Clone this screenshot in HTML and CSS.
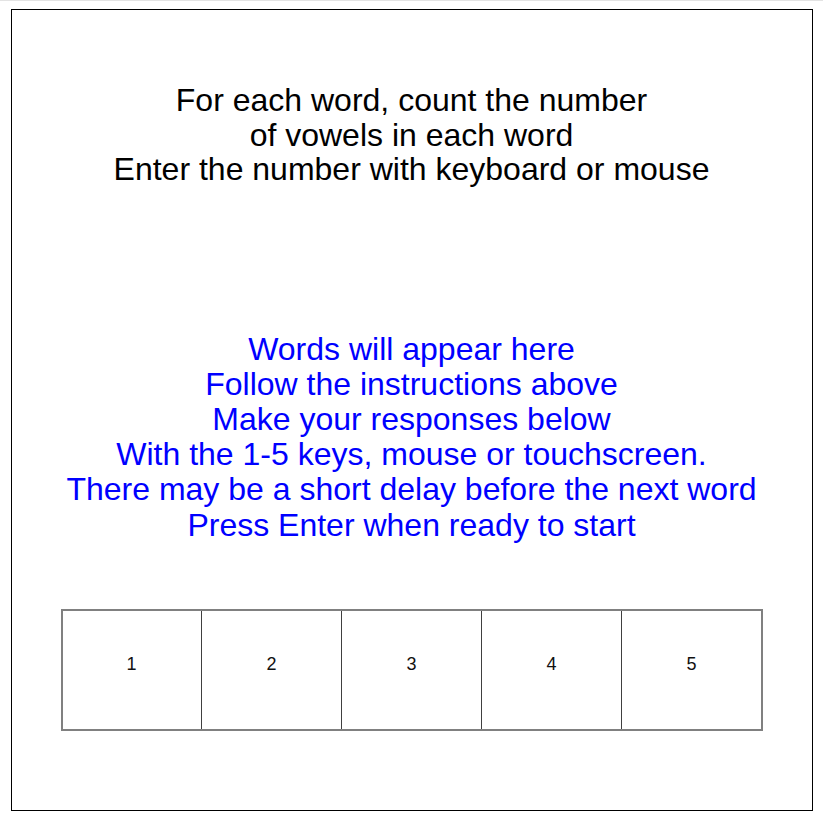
FILE: index.html
```html
<!DOCTYPE html>
<html lang="en">
<head>
<meta charset="utf-8">
<title>Vowel counting task</title>
<link rel="stylesheet" href="styles.css">
</head>
<body>
<main class="stage">
  <div class="instructions">
    <div>For each word, count the number</div>
    <div>of vowels in each word</div>
    <div>Enter the number with keyboard or mouse</div>
  </div>
  <div class="message">
    <div>Words will appear here</div>
    <div>Follow the instructions above</div>
    <div>Make your responses below</div>
    <div>With the 1-5 keys, mouse or touchscreen.</div>
    <div>There may be a short delay before the next word</div>
    <div>Press Enter when ready to start</div>
  </div>
  <div class="responses">
    <div class="key key-first">1</div>
    <div class="key">2</div>
    <div class="key">3</div>
    <div class="key">4</div>
    <div class="key">5</div>
  </div>
</main>
</body>
</html>
```

FILE: styles.css
```css
html {
  border-top: 1px solid #e3e3e3;
  background: #ffffff;
}

body {
  margin: 8px;
  font-family: "Liberation Sans", Arial, sans-serif;
  color: #000000;
}

.stage {
  box-sizing: content-box;
  width: 800px;
  height: 800px;
  margin: 0 auto;
  border: 1px solid #000000;
  display: flex;
  flex-direction: column;
  align-items: center;
}

.instructions,
.message {
  font-size: 32px;
  text-align: center;
}

.instructions {
  margin-top: 73px;
  line-height: 34.5px;
}

.message {
  margin-top: 145px;
  line-height: 35.2px;
  color: #0000ff;
}

.responses {
  margin-top: 66.4px;
  display: flex;
  border: 2px solid #808080;
  height: 118px;
}

.key {
  width: 140px;
  border-left: 1px solid #404040;
  display: flex;
  align-items: center;
  justify-content: center;
  padding-bottom: 12px;
  padding-left: 1px;
  box-sizing: border-box;
  font-size: 18px;
  color: #111111;
}

.key-first {
  width: 138px;
  border-left: none;
  padding-left: 0;
}
```
